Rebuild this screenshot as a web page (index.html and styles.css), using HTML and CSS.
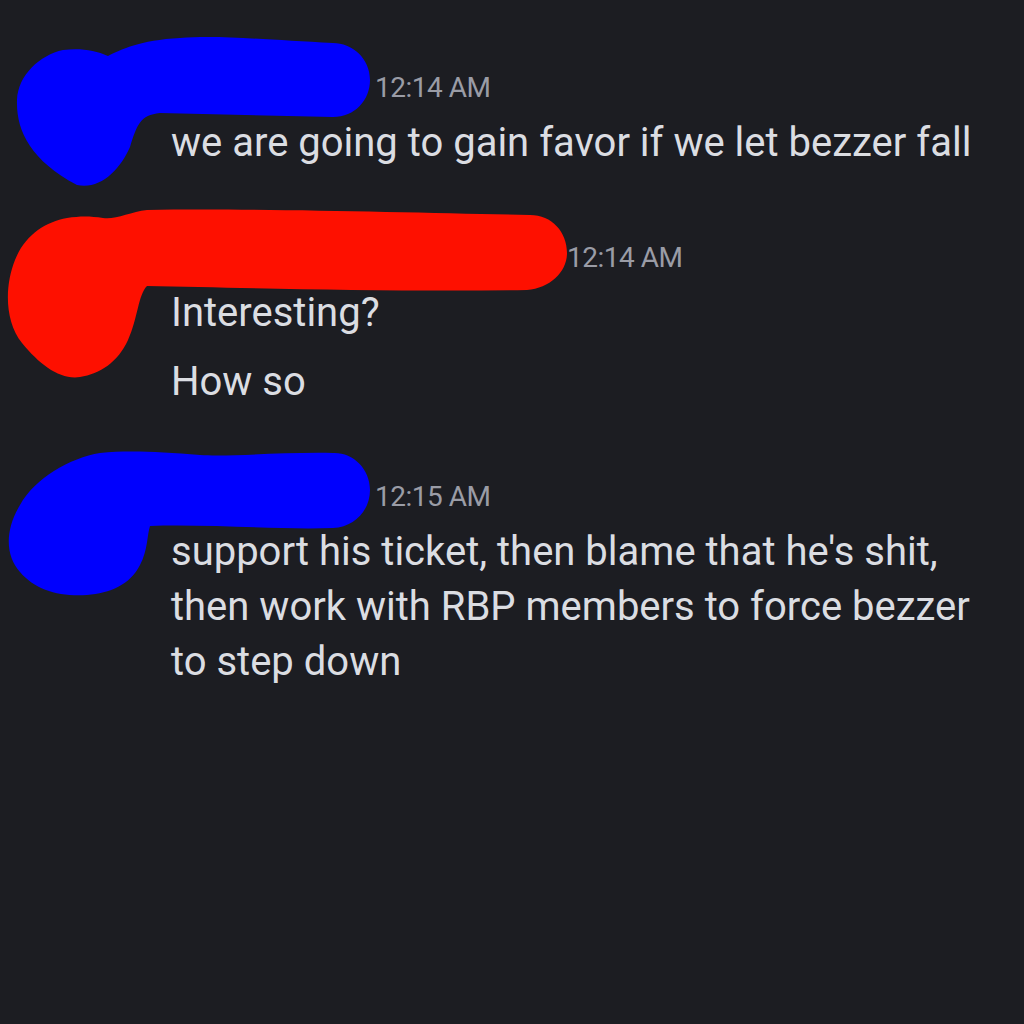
FILE: index.html
```html
<!DOCTYPE html>
<html lang="en">
<head>
    <meta charset="UTF-8">
    <title>Chat</title>
    <link rel="stylesheet" href="styles.css">
</head>
<body>
    <div class="chat">
        <div class="group">
            <div class="header">
                <span class="author short">someone</span>
                <span class="time">12:14 AM</span>
            </div>
            <div class="msg">we are going to gain favor if we let bezzer fall</div>
        </div>

        <div class="group">
            <div class="header">
                <span class="author long">someone else</span>
                <span class="time">12:14 AM</span>
            </div>
            <div class="msg">Interesting?</div>
            <div class="msg next">How so</div>
        </div>

        <div class="group">
            <div class="header">
                <span class="author short">someone</span>
                <span class="time">12:15 AM</span>
            </div>
            <div class="msg">support his ticket, then blame that he's shit, then work with RBP members to force bezzer to step down</div>
        </div>
    </div>

    <!-- names scribbled out -->
    <svg class="redactions" width="1024" height="1024" viewBox="0 0 1024 1024">
        <path class="blue" d="M63 50 C40 55,18 75,17 100 C16 130,30 160,77 185 C100 190,120 170,130 147 C137 125,140 115,160 113 L333 117 C355 117,370 100,370 80 C370 58,352 43,333 43 C270 40,220 35,180 38 C140 40,120 50,108 56 C95 50,80 48,63 50 Z"/>
        <path class="red" d="M67 218 C45 222,25 235,15 260 C5 285,4 320,22 343 C40 365,60 380,80 377 C100 374,118 362,128 340 C138 318,138 295,147 286 C250 288,400 292,527 290 C550 288,567 272,567 253 C567 232,552 215,530 215 C420 213,250 208,147 210 C130 212,115 220,103 218 C90 216,80 216,67 218 Z"/>
        <path class="blue" d="M100 453 C70 458,35 478,20 505 C5 530,5 555,20 572 C35 590,60 597,87 595 C110 593,130 585,140 565 C148 550,147 535,150 526 C210 524,280 530,333 528 C355 527,370 510,370 490 C370 468,352 452,333 453 C280 452,230 457,200 455 C160 452,130 450,100 453 Z"/>
    </svg>
</body>
</html>
```

FILE: styles.css
```css
body {
    margin: 0;
    width: 1024px;
    height: 1024px;
    background: #1c1d22;
    font-family: Roboto, "Noto Sans", sans-serif;
    overflow: hidden;
    position: relative;
}

.chat {
    display: flex;
    flex-direction: column;
    gap: 60px;
    padding: 60px 0 0 171px;
}

.header {
    display: flex;
    align-items: center;
    gap: 5px;
    height: 55px;
}

.author {
    color: transparent;
    font-size: 30px;
}

.author.short {
    width: 199px;
}

.author.long {
    width: 391px;
}

.time {
    color: #9a9ca6;
    font-size: 28px;
    letter-spacing: -0.5px;
}

.msg {
    color: #dbdde2;
    font-size: 40px;
    line-height: 55px;
    padding-right: 30px;
}

.msg.next {
    margin-top: 14px;
}

.redactions {
    position: absolute;
    top: 0;
    left: 0;
    pointer-events: none;
}

.blue {
    fill: #0000fe;
}

.red {
    fill: #fe1000;
}
```
